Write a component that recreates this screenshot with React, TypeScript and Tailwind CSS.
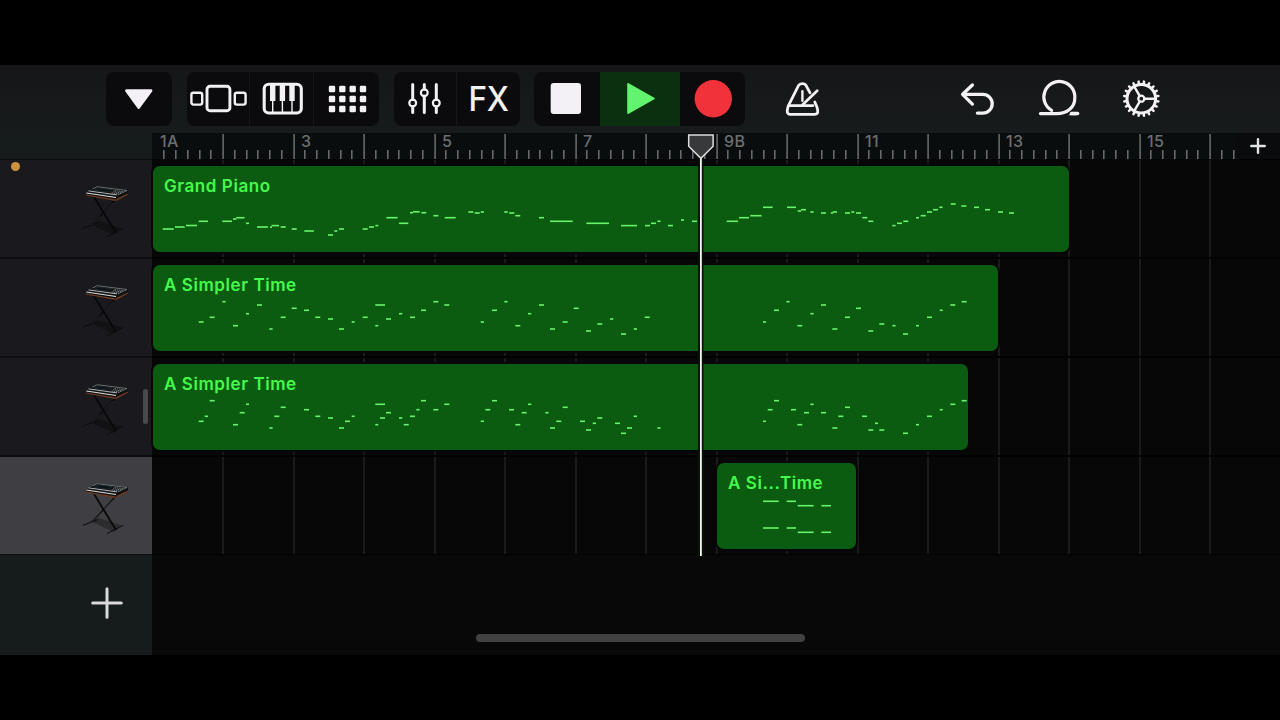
import type { ReactNode } from 'react';

type Note = [x: number, y: number, w?: number];

type Track = {
  name: string;
  start: number;
  width: number;
  notes: Note[];
};

const ROW_HEIGHT = 99;
const TIMELINE_X = 152;
const TIMELINE_Y = 159;
const BAR_WIDTH = 70.5;

const tracks: Track[] = [
  {
    name: 'Grand Piano',
    start: 153,
    width: 916,
    notes: [
      [162.7, 229, 11], [175, 227, 9.7], [186, 225.5, 11], [198.7, 221.3, 9.3], [222.3, 221.3, 9.7],
      [233, 219, 3.5], [236.3, 217.7, 8.3], [246, 223.3, 3], [257, 227, 11], [270, 227.2, 2], [271.5, 225.6, 7.5],
      [280.7, 227], [291.7, 229], [304.3, 231, 9.5], [328, 235], [334.3, 231, 3], [339, 229],
      [362.7, 229], [369, 227], [375.3, 225.6, 3], [386.3, 217.7, 11.3], [399, 223.3, 9.3], [410, 212.7, 3],
      [413, 211.8, 6.7], [421.3, 212.7], [433.3, 215.7], [444.7, 217.7, 11], [468.3, 212], [474.7, 213],
      [480.7, 212, 3.3], [504.3, 212, 3.5], [509.3, 213], [515.3, 215.7], [539, 217.7], [550, 221.3, 22.7],
      [586.3, 223.3, 22.7], [621, 225.6, 16], [645, 225.6], [651, 223.3], [657.3, 221.3, 3.3], [668, 225.6],
      [681, 220, 3], [692, 221.3], [726.7, 221.3, 11.3], [739, 217.7, 10], [750.3, 215.7, 11.3],
      [763, 207.3, 9.7], [787, 207.3, 9], [797.7, 211, 3.3], [801, 209.7], [810.3, 212, 3.3], [821, 213],
      [830.7, 213, 2.5], [832.7, 212, 4.3], [845, 213], [851.3, 212, 3], [856, 213], [862.3, 217.7],
      [868.3, 221.3], [892.3, 225.6, 3.3], [897, 223.3], [903.3, 221.3], [916, 217.7, 3], [920.7, 215.7],
      [927, 212], [933, 209.7], [939.3, 207.3, 3.3], [950.7, 204], [961.3, 206], [974, 207.3], [985, 209.7],
      [998, 212], [1009, 213],
    ],
  },
  {
    name: 'A Simpler Time',
    start: 153,
    width: 845,
    notes: [
      [198.7, 322], [209.7, 317.3], [222.3, 301.7, 3.3], [233, 325.7], [246, 313.7, 3], [257, 305],
      [269.3, 329, 3.3], [280.7, 317.3], [291.7, 308.3], [304, 310.3], [315.3, 317.3], [328, 319],
      [339, 329], [351.7, 322, 3], [362.7, 317.3], [375.3, 325.7, 3], [375.3, 305, 9.7], [386, 319],
      [399, 313.7, 3.3], [410, 317.3], [421, 310.3], [433.3, 301.7], [444.3, 305], [480.7, 322, 3.3],
      [492, 310.3], [504.3, 301.7, 3.3], [515.3, 325.7], [528, 313.7, 3.3], [539, 305], [550, 329],
      [562.7, 322], [573.7, 308.3], [586, 331], [597.3, 324], [610, 319, 3.3], [621, 334],
      [633.7, 329, 3.3], [644.7, 317.3], [763, 322, 3], [774, 310.3], [786.3, 301.7, 3.3], [797.3, 325.7],
      [810.3, 313.7, 3.3], [821, 305], [832.3, 329], [845, 317.3], [856, 308.3], [868.3, 331],
      [879.3, 324], [892.3, 325.7, 3.3], [903, 334], [916, 325.7, 3], [927, 317.3], [939.7, 310.3, 3],
      [950.3, 305], [961.7, 301.7],
    ],
  },
  {
    name: 'A Simpler Time',
    start: 153,
    width: 815,
    notes: [
      [198.7, 421.3], [204.7, 416.3, 3.3], [209.7, 400.7], [233, 424.7], [239.7, 412.7], [246, 404.3, 3],
      [269.3, 428, 3.3], [274.3, 416.3], [280.7, 407.3], [304, 409.7], [315.3, 416.3], [328, 418],
      [339, 428], [345, 421.3], [351.7, 416.3, 3], [375.3, 424.7, 3], [375.3, 404.3, 9.7], [380, 418],
      [386, 412.7], [399, 418, 3.3], [403.7, 424.7], [410, 416.3], [416.3, 409.7, 3.3], [421, 400.7],
      [433.3, 409.7], [444.3, 404.3], [480.7, 421.3, 3.3], [485.3, 409.7], [492, 400.7], [509, 409.7],
      [515.3, 424.7], [521.7, 412.7], [528, 404.3, 3.3], [545.3, 412.7, 3.3], [550, 428], [556.3, 421.3],
      [562.7, 407.3], [580, 421.3], [586, 430], [592.7, 423.3, 3.3], [597.3, 418], [615, 423.3],
      [621, 433.3], [627, 428], [633.7, 416.3, 3.3], [657.3, 428, 3.3], [763, 421.3, 3], [767.7, 409.7],
      [774, 400.7], [791, 409.7], [797.3, 424.7], [804, 412.7], [810.3, 404.3, 3.3], [821, 412.7],
      [832.3, 428], [838.3, 416.3], [845, 407.3], [862, 416.3], [868.3, 430], [875, 423.3, 3],
      [879.3, 430], [903, 433.3], [916, 424.7, 3], [927, 416.3], [939.7, 409.7, 3], [950.3, 404.3],
      [961.7, 400.7],
    ],
  },
  {
    name: 'A Si...Time',
    start: 717,
    width: 139,
    notes: [
      [763, 501.3, 15.7], [786.7, 501.3, 9.3], [797.7, 505.7, 16], [821.3, 505.7, 9.7],
      [763, 528, 15.7], [786.7, 528, 9.3], [797.7, 532.3, 16], [821.3, 532.3, 9.7],
    ],
  },
];

const barLabels = ['1A', '3', '5', '7', '9B', '11', '13', '15'];

function Icon({ w = 54, children }: { w?: number; children: ReactNode }) {
  return (
    <svg
      width={w}
      height="54"
      viewBox={`0 0 ${w} 54`}
      fill="none"
      stroke="#f3f1f5"
      strokeWidth="2.8"
      strokeLinecap="round"
      strokeLinejoin="round"
      className="block shrink-0"
    >
      {children}
    </svg>
  );
}

function ButtonGroup({ className = '', children }: { className?: string; children: ReactNode }) {
  return (
    <div className={`flex h-[54px] shrink-0 overflow-hidden rounded-lg bg-[#0b0b0d] ${className}`}>
      {children}
    </div>
  );
}

function Divider() {
  return <div className="-ml-px w-px shrink-0 bg-[#161618]" />;
}

function Toolbar() {
  const teeth = Array.from({ length: 20 }, (_, i) => i * 18 + 9);

  return (
    <header className="flex h-[68px] items-start bg-linear-to-b from-[#161618] to-[#171b1c] pt-[7px] pl-[106px]">
      <ButtonGroup>
        <button aria-label="My Songs">
          <Icon w={66}>
            <path d="M20.5 18.7h24.5l-12.3 16.8z" fill="#f3f1f5" />
          </Icon>
        </button>
      </ButtonGroup>

      {/* View switcher */}
      <ButtonGroup className="ml-[15px]">
        <button aria-label="Browser">
          <Icon w={63}>
            <rect x="4.4" y="20.8" width="10.8" height="11.8" rx="2" strokeWidth="2.4" />
            <rect x="20" y="14.3" width="22.9" height="24.4" rx="3" strokeWidth="2.9" />
            <rect x="47.8" y="20.8" width="10.8" height="11.8" rx="2" strokeWidth="2.4" />
          </Icon>
        </button>
        <Divider />
        <button aria-label="Instrument">
          <Icon w={64}>
            <rect x="14.2" y="12.2" width="37.1" height="28.8" rx="4.5" strokeWidth="3.1" />
            <path d="M20 13h5.4v16H20zM29.7 13h5.4v16h-5.4zM39.3 13h5.4v16h-5.4z" fill="#f3f1f5" stroke="none" />
            <path d="M22.7 28v12M32.4 28v12M42 28v12" strokeWidth="1.4" strokeLinecap="butt" />
          </Icon>
        </button>
        <Divider />
        <button aria-label="Live loops">
          <Icon w={65}>
            {[17, 27, 37].map((y) =>
              [18, 28.3, 38.7, 49].map((x) => (
                <rect key={`${x}-${y}`} x={x - 3.2} y={y - 3.2} width="6.4" height="6.4" rx="1.3" fill="#f3f1f5" stroke="none" />
              )),
            )}
          </Icon>
        </button>
      </ButtonGroup>

      <ButtonGroup className="ml-[15px]">
        <button aria-label="Track controls">
          <Icon w={63}>
            <path
              d="M18.7 12.6v15M18.7 34.4v6M30.3 12.6v4.6M30.3 24v16.4M42.3 12.6v15M42.3 34.4v6"
              strokeWidth="3"
            />
            <circle cx="18.7" cy="31" r="3.4" strokeWidth="2.2" />
            <circle cx="30.3" cy="20.8" r="3.4" strokeWidth="2.2" />
            <circle cx="42.3" cy="31" r="3.4" strokeWidth="2.2" />
          </Icon>
        </button>
        <Divider />
        <button className="w-[63px] text-[34px] leading-[54px] font-medium text-[#f3f1f5]">
          <span className="block scale-x-93 tracking-[-0.5px]">FX</span>
        </button>
      </ButtonGroup>

      {/* Transport */}
      <ButtonGroup className="ml-[14px]">
        <button aria-label="Stop">
          <Icon w={66}>
            <rect x="16.7" y="11" width="30.3" height="31" rx="3" fill="#f3f1f5" stroke="none" />
          </Icon>
        </button>
        <button aria-label="Play" className="bg-[#0b3010]">
          <Icon w={80}>
            <path d="M28.2 12v29l25.6-14.5z" fill="#62f36f" stroke="#62f36f" strokeWidth="2" />
          </Icon>
        </button>
        <button aria-label="Record">
          <Icon w={65}>
            <circle cx="33.3" cy="26.7" r="18.7" fill="#f2323b" stroke="none" />
          </Icon>
        </button>
      </ButtonGroup>

      <button aria-label="Metronome" className="ml-[30px]">
        <Icon>
          <path d="M35 20.8L31 13.3Q29.8 11.6 27.2 11.6Q24.6 11.6 23.5 13.5L13.2 34.2Q10.6 42.3 15 42.3H39.4Q44.6 42.3 41.9 35L39.8 30" strokeWidth="2.8" />
          <path d="M13.8 33.6H38" strokeWidth="2.6" />
          <path d="M27.4 19.2v9.6" strokeWidth="2.4" />
          <path d="M27.6 32.8L42.2 18.8" strokeWidth="2.7" />
        </Icon>
      </button>
      <button aria-label="Undo" className="ml-[122px]">
        <Icon>
          <path d="M21.4 13L11.6 22.3l9.8 9.8M11.6 22.3H31.8a9.4 9.4 0 0 1 0 18.8H26.4" strokeWidth="3.3" />
        </Icon>
      </button>
      <button aria-label="Loop browser" className="ml-[27px]">
        <Icon>
          <path d="M8.4 41.6H24.5C35.5 41.6 42.8 35 42.8 26.2A15.5 15.5 0 1 0 19.6 38.4" strokeWidth="3.2" />
          <path d="M39.5 41.6H45.6" strokeWidth="3.5" />
          <path d="M36.3 43.3l5-3.4h3v3.4z" fill="#f3f1f5" stroke="none" />
        </Icon>
      </button>
      <button aria-label="Settings" className="ml-[28px]">
        <Icon>
          <circle cx="27.3" cy="26.7" r="14.3" strokeWidth="3" />
          {teeth.map((a) => (
            <path key={a} d="M42.2 26.7h2.4" transform={`rotate(${a} 27.3 26.7)`} strokeWidth="2.5" />
          ))}
          <circle cx="27.3" cy="26.7" r="3" strokeWidth="2.3" />
          {[0, 120, 240].map((a) => (
            <path key={a} d="M30.6 26.7h11" transform={`rotate(${a} 27.3 26.7)`} strokeWidth="2.4" />
          ))}
        </Icon>
      </button>
    </header>
  );
}

function Ruler() {
  const ticks = Array.from({ length: 92 }, (_, i) => i + 1);

  return (
    <div className="flex h-[26px]">
      <div className="w-[152px] bg-[#161b1c]" />
      <div className="relative w-[1084px] bg-[#0a0d0e]">
        <svg className="absolute inset-0" width="1084" height="26" fill="#67696b">
          {ticks.map((i) => {
            const isBar = i % 6 === 0;
            return (
              <rect
                key={i}
                x={Math.floor((i * BAR_WIDTH) / 6) + (isBar ? 0.3 : 0)}
                y={isBar ? 1 : 17}
                width="1.6"
                height={isBar ? 25 : 9}
              />
            );
          })}
        </svg>
        <div className="flex pl-2">
          {barLabels.map((label) => (
            <span key={label} className="w-[141px] text-base leading-[17px] font-medium tracking-[0.4px] text-[#6b6d6f] last:w-auto">
              {label}
            </span>
          ))}
        </div>
      </div>
      <div className="flex flex-1 items-center justify-center bg-[#0a0b0c]">
        <svg width="16" height="16" viewBox="0 0 16 16" stroke="#e4e4e6" strokeWidth="2.4" strokeLinecap="round">
          <path d="M8 1.3v13.4M1.3 8h13.4" />
        </svg>
      </div>
    </div>
  );
}

function Synth() {
  return (
    <svg width="50" height="60" viewBox="0 0 50 60" fill="none">
      <path d="M10 42l9-3 22 7-7 7z" fill="#000" opacity="0.3" />
      {/* X stand */}
      <path d="M35 18L12 43" stroke="#08080a" strokeWidth="1.2" />
      <path d="M14 15L36 51" stroke="#08080a" strokeWidth="1.8" />
      <path d="M3 46.3L18 40.5M27 54.7L43.3 46.3" stroke="#0b0b0d" strokeWidth="1" />
      <path d="M12 43l8-8.5M24 30l9-9" stroke="#4c4c50" strokeWidth="0.4" />
      {/* Body */}
      <path d="M6 10.5L17.3 4.2 48 8.3V12L36.3 18.8 5.7 12.6z" fill="#101113" />
      <path d="M5.8 12.4l30 5.2v1.4L5.8 13.6zM36.3 18.9l11.5-6.2v-1.2l-11.5 5.6z" fill="#713a20" />
      <path d="M6.3 11l29.7 4.5" stroke="#dededc" strokeWidth="1.2" />
      <path d="M8.5 8.9l28.5 4" stroke="#c3c6c6" strokeWidth="0.9" />
      <path d="M12.5 7L17.3 4.7 47 8.5l-9 4.2" stroke="#7c8787" strokeWidth="0.8" />
      <path d="M18.5 6l14 1.8-4.5 2.4-13.5-1.8z" fill="#0c1418" stroke="#3b474c" strokeWidth="0.4" />
      <path d="M34.5 8.6l8.5 1M33 9.8l8 1M31.5 11l7.5 1" stroke="#a5acac" strokeWidth="0.7" strokeDasharray="1.5 0.8" />
    </svg>
  );
}

function TrackHeader({ index }: { index: number }) {
  const selected = index === 3;
  return (
    <div
      className={`relative flex h-[99px] border-y border-[#0d0d10] pt-[22px] pl-20 ${selected ? 'bg-[#3f3f43]' : 'bg-[#1a191e]'}`}
    >
      <Synth />
      {index === 0 && <span className="absolute top-[2px] left-[11px] size-[9px] rounded-full bg-[#cb9240]" />}
      {index === 2 && <span className="absolute top-[31px] left-[143px] h-[35px] w-[5px] rounded-sm bg-[#49494d]" />}
    </div>
  );
}

function Region({ track, index }: { track: Track; index: number }) {
  const top = TIMELINE_Y + index * ROW_HEIGHT + 7;
  return (
    <div
      className="relative h-[86px] shrink-0 rounded-[7px] bg-[#0b5b10] ring-2 ring-[#060706]"
      style={{ width: track.width, marginLeft: track.start - TIMELINE_X }}
    >
      <svg
        className="absolute inset-0"
        width={track.width}
        height="86"
        viewBox={`${track.start} ${top} ${track.width} 86`}
        fill="#66f46b"
      >
        {track.notes.map(([x, y, w = 5], i) => (
          <rect key={i} x={x} y={y - 0.8} width={w} height="1.6" />
        ))}
      </svg>
      <div className="pt-[9px] pl-[11px] text-[17px] leading-[22px] font-semibold tracking-[0.58px] whitespace-nowrap text-[#45fb4d]">
        {track.name}
      </div>
    </div>
  );
}

function Playhead() {
  return (
    <svg className="absolute top-[-26px] left-[534px]" width="30" height="424" viewBox="0 0 30 424">
      <rect x="12" y="26" width="5.5" height="397" fill="#0a120a" />
      <rect x="14" y="24" width="1.8" height="399" fill="#f4f4f4" />
      <path d="M2.7 2h24.4v11.2L14.9 25.4 2.7 13.2z" fill="#38393a" stroke="#dcdcdc" strokeWidth="1.5" />
    </svg>
  );
}

function Timeline() {
  return (
    <div className="relative w-[1128px] bg-[#070707]">
      <svg className="absolute inset-0" width="1128" height="396" fill="#232425">
        {Array.from({ length: 15 }, (_, i) => (
          <rect key={i} x={Math.floor((i + 1) * BAR_WIDTH) + 0.3} y="0" width="1.4" height="396" />
        ))}
      </svg>
      {tracks.map((track, i) => (
        <div key={i} className="relative flex h-[99px] border-y border-[#020202] pt-[6px]">
          <Region track={track} index={i} />
        </div>
      ))}
      <Playhead />
    </div>
  );
}

export default function App() {
  return (
    <div className="h-[720px] w-[1280px] overflow-hidden bg-black pt-[65px] font-['Inter',sans-serif]">
      <Toolbar />
      <Ruler />
      <div className="flex">
        <div className="w-[152px]">
          {tracks.map((_, i) => (
            <TrackHeader key={i} index={i} />
          ))}
        </div>
        <Timeline />
      </div>
      <div className="flex h-[100px]">
        <button aria-label="Add track" className="w-[152px] bg-[#161b1c] pb-1 pl-[91px]">
          <svg width="32" height="32" viewBox="0 0 32 32" stroke="#dadada" strokeWidth="3" strokeLinecap="round">
            <path d="M16 1.7v28.6M1.7 16h28.6" />
          </svg>
        </button>
        <div className="flex-1 bg-[#080808] pt-[79px] pl-[324px]">
          <div className="h-2 w-[329px] rounded-full bg-[#424242]" />
        </div>
      </div>
    </div>
  );
}
